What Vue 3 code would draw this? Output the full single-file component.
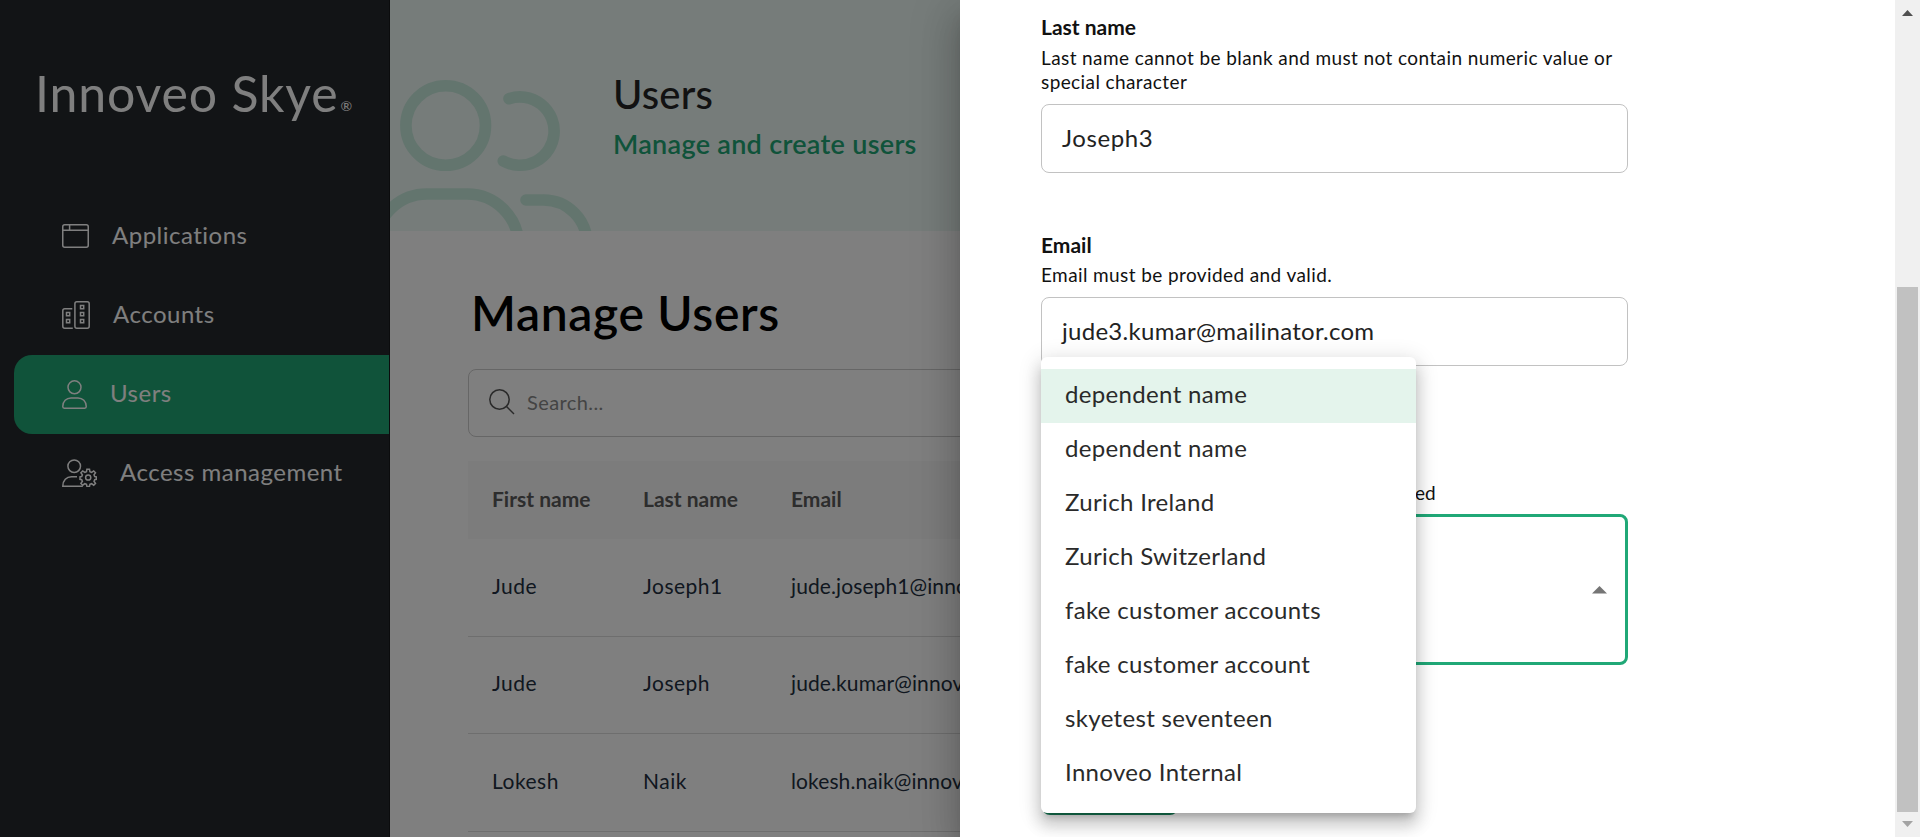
<script setup>
const menu = [
  { id: 'apps', label: 'Applications' },
  { id: 'accounts', label: 'Accounts' },
  { id: 'users', label: 'Users', active: true },
  { id: 'access', label: 'Access management' },
]
const rows = [
  ['Jude', 'Joseph1', 'jude.joseph1@innoveo.com'],
  ['Jude', 'Joseph', 'jude.kumar@innoveo.com'],
  ['Lokesh', 'Naik', 'lokesh.naik@innoveo.com'],
]
const options = [
  'dependent name',
  'dependent name',
  'Zurich Ireland',
  'Zurich Switzerland',
  'fake customer accounts',
  'fake customer account',
  'skyetest seventeen',
  'Innoveo Internal',
]
</script>

<template>
  <div class="page">
    <aside class="sidebar">
      <div class="logo"><span class="brand">Innoveo Skye</span><span class="reg">®</span></div>
      <nav class="menu">
        <a v-for="m in menu" :key="m.id" class="item" :class="[m.id, { active: m.active }]">
          <svg v-if="m.id === 'apps'" width="27" height="24" viewBox="0 0 27 24">
            <rect x=".75" y=".75" width="25.5" height="22.5" rx="2" />
            <path d="M.75 6.2h25.5M7.6.75v5.4" />
          </svg>
          <svg v-else-if="m.id === 'accounts'" width="28" height="28" viewBox="0 0 28 28">
            <rect x="12.9" y=".75" width="14.3" height="26.5" rx="2" />
            <path d="M10.3 7.7H2.8a2 2 0 0 0-2 2v15.500a2 2 0 0 0 2 2h8" />
            <path d="M4.500 11.500h3.200v3.200h-3.200zM4.500 18.500h3.200v3.200h-3.200zM18.500 4.500h3.200v3.200h-3.200zM18.500 11.500h3.200v3.200h-3.200zM18.500 18.500h3.200v3.200h-3.200z" />
          </svg>
          <svg v-else-if="m.id === 'users'" width="25" height="29" viewBox="0 0 25 29">
            <circle cx="12.500" cy="7.300" r="6.500" />
            <path d="M.75 26.500c0-5 3.600-8.600 8.300-8.600h6.900c4.700 0 8.300 3.600 8.300 8.600 0 1.100-.5 1.700-1.500 1.700H2.300c-1 0-1.550-.6-1.550-1.700z" />
          </svg>
          <svg v-else width="35" height="28" viewBox="0 0 35 28">
            <circle cx="12.200" cy="7.200" r="6.300" />
            <path d="M15 17.700H9.500C4.500 17.700.8 21.500.8 27.200h20" />
            <circle cx="26.200" cy="18.500" r="2.600" />
            <path d="M24.500 12.700l.4-2.500h2.600l.4 2.500 1.700.7 2.100-1.500 1.800 1.900-1.500 2 .7 1.700 1.600.3v2.500l-1.600.4-.7 1.600 1.500 2.100-1.800 1.800-2.100-1.500-1.700.7-.4 2h-2.600l-.4-2-1.700-.7-2.100 1.500-1.800-1.800 1.500-2.100-.7-1.600-1.700-.4v-2.500l1.700-.3.7-1.700-1.500-2 1.800-1.900 2.100 1.500z" />
          </svg>
          <span>{{ m.label }}</span>
        </a>
      </nav>
    </aside>

    <main class="main">
      <header class="banner">
        <svg class="people" width="220" height="160" viewBox="390 71 220 160">
          <circle cx="445.700" cy="125.500" r="39.800" />
          <path d="M509 98.700A34.200 34.200 0 1 1 503.300 161" />
          <path d="M375.400 245.600A51.600 51.600 0 0 1 427 194H467A51.600 51.600 0 0 1 518.600 245.600" />
          <path d="M526 200H543.500A43.500 43.500 0 0 1 587 243.500" />
        </svg>
        <div class="heading">
          <h2>Users</h2>
          <p>Manage and create users</p>
        </div>
      </header>
      <section class="content">
        <h1>Manage Users</h1>
        <div class="search">
          <svg width="26" height="26" viewBox="0 0 26 26">
            <circle cx="10.500" cy="10.500" r="9.700" />
            <path d="M17.300 17.300L25 25" />
          </svg>
          <span>Search...</span>
        </div>
        <div class="table">
          <div class="tr th"><span>First name</span><span>Last name</span><span>Email</span></div>
          <div v-for="(r, i) in rows" :key="i" class="tr td">
            <span v-for="c in r" :key="c">{{ c }}</span>
          </div>
        </div>
      </section>
    </main>

    <div class="backdrop"></div>

    <div class="drawer">
      <form class="form">
        <div class="field">
          <label>Last name</label>
          <p>Last name cannot be blank and must not contain numeric value or special character</p>
          <div class="input short">Joseph3</div>
        </div>
        <div class="field second">
          <label>Email</label>
          <p>Email must be provided and valid.</p>
          <div class="input">jude3.kumar@mailinator.com</div>
        </div>
        <div class="field third">
          <p class="tail">ed</p>
          <div class="select">
            <svg width="15" height="8" viewBox="0 0 15 8"><path d="M0 7.500L7.500 0L15 7.500z" /></svg>
          </div>
        </div>
        <div class="submit"></div>
      </form>
      <div class="scrollbar">
        <svg width="11" height="6" viewBox="0 0 11 6"><path d="M0 6L5.500 0L11 6z" fill="#505050" /></svg>
        <div class="thumb"></div>
        <svg width="11" height="6" viewBox="0 0 11 6"><path d="M0 0L5.500 6L11 0z" fill="#a3a3a3" /></svg>
      </div>
      <ul class="dropdown">
        <li v-for="(o, i) in options" :key="i" :class="{ selected: i === 0 }">{{ o }}</li>
      </ul>
    </div>
  </div>
</template>

<style>
body {
  overflow: hidden;
}
</style>

<style scoped>
* {
  box-sizing: border-box;
  margin: 0;
  padding: 0;
}
.page {
  position: relative;
  display: flex;
  width: 1920px;
  height: 837px;
  overflow: hidden;
  background: #fff;
  font-family: Lato, "Open Sans", sans-serif;
  font-size: 20px;
  white-space: nowrap;
}
.sidebar {
  width: 390px;
  flex: none;
  background: #24282c;
  color: #fff;
  border-right: 1px solid #17191b;
}
.logo {
  height: 197px;
  padding: 63px 0 0 35px;
  display: flex;
  line-height: 60px;
}
.brand {
  font-size: 50px;
  letter-spacing: 0.850px;
}
.reg {
  font-size: 14px;
  line-height: 14px;
  margin-top: 36px;
  margin-left: 2px;
}
.item {
  display: flex;
  align-items: center;
  height: 79px;
  margin-left: 14px;
  padding-left: 48px;
  border-radius: 18px 0 0 18px;
  font-size: 24px;
  line-height: 30px;
  letter-spacing: 0.500px;
}
.item span {
  margin-bottom: 3px;
}
.item svg {
  flex: none;
  margin-right: 23px;
  margin-bottom: 1px;
  fill: none;
  stroke: #fff;
  stroke-width: 1.5;
}
.item.users svg {
  margin-bottom: 0;
}
.active {
  background: #20a674;
}
.main {
  flex: 1;
  min-width: 0;
}
.banner {
  height: 231px;
  background: #ecf8f4;
  display: flex;
  align-items: flex-end;
}
.people {
  fill: none;
  stroke: #c6eadc;
  stroke-width: 11.600;
  stroke-linecap: round;
}
.heading {
  align-self: flex-start;
  padding: 70px 0 0 3px;
}
h2 {
  font-size: 40px;
  line-height: 48px;
  font-weight: 500;
  letter-spacing: 0.200px;
  color: #242424;
}
.heading p {
  margin-top: 10px;
  font-size: 27px;
  line-height: 32px;
  font-weight: 600;
  letter-spacing: 0.300px;
  color: #20a674;
}
.content {
  padding: 54px 0 0 78px;
}
h1 {
  padding-left: 3px;
  font-size: 48px;
  line-height: 56px;
  font-weight: 600;
  letter-spacing: 0.650px;
  color: #000;
}
.search {
  margin-top: 28px;
  height: 68px;
  border: 1px solid #ccc;
  border-radius: 8px;
  display: flex;
  align-items: center;
  gap: 12px;
  padding: 0 0 2px 20px;
  color: #888;
  letter-spacing: 0.400px;
}
.search span {
  margin-bottom: 1px;
}
.search svg {
  fill: none;
  stroke: #555;
  stroke-width: 1.5;
}
.table {
  margin-top: 24px;
}
.tr {
  display: grid;
  grid-template-columns: 151px 148px 1fr;
  align-items: center;
  padding: 0 0 4px 24px;
}
.th {
  height: 78px;
  background: #f8f8f8;
  font-weight: 700;
  font-size: 21px;
  color: #5a5a5a;
}
.td {
  height: 97.600px;
  border-bottom: 1.500px solid #dcdcdc;
  font-size: 21px;
  letter-spacing: 0.500px;
  color: #222f40;
}
.td span:last-child {
  letter-spacing: 0.100px;
}
.backdrop {
  position: absolute;
  inset: 0;
  background: rgba(0, 0, 0, 0.5);
}
.drawer {
  position: absolute;
  top: 0;
  right: 0;
  width: 960px;
  height: 837px;
  display: flex;
  justify-content: space-between;
  background: #fff;
  box-shadow: 0 12px 15px -7px rgba(0, 0, 0, 0.2), 0 24px 36px 3px rgba(0, 0, 0, 0.14), 0 9px 45px 8px rgba(0, 0, 0, 0.12);
}
.form {
  width: 668px;
  padding: 15px 0 0 81px;
}
.field label {
  display: block;
  font-size: 21px;
  line-height: 24px;
  font-weight: 700;
  color: #111;
}
.field p {
  margin-top: 7px;
  font-size: 19px;
  line-height: 24px;
  letter-spacing: 0.400px;
  color: #111;
  white-space: normal;
}
.input {
  margin-top: 10px;
  height: 69px;
  border: 1px solid #c2c2c2;
  border-radius: 8px;
  padding-left: 20px;
  font-size: 24px;
  line-height: 65px;
  letter-spacing: 0.280px;
  color: #222;
}
.input.short {
  letter-spacing: 0.600px;
}
.field.second {
  margin-top: 60px;
}
.second p {
  margin-top: 6px;
}
.field.third {
  margin-top: 115px;
}
.field .tail {
  margin-left: 374px;
  letter-spacing: 0;
}
.select {
  margin-top: 9px;
  height: 151px;
  border: 3px solid #20a877;
  border-radius: 8px;
  display: flex;
  justify-content: flex-end;
  align-items: center;
  padding-right: 18px;
}
.select svg {
  fill: #757575;
}
.submit {
  margin: 90px 0 0 1px;
  width: 136px;
  height: 60px;
  border-radius: 8px;
  background: #178059;
}
.scrollbar {
  width: 25px;
  padding: 10px 2px 10px;
  background: #f0f0f0;
  display: flex;
  flex-direction: column;
  align-items: center;
}
.thumb {
  margin: 271px 0 9px;
  width: 21px;
  height: 525px;
  background: #c1c1c1;
}
.dropdown {
  position: absolute;
  left: 81px;
  top: 357px;
  width: 375px;
  height: 456px;
  padding: 12px 0;
  list-style: none;
  background: #fff;
  border-radius: 6px;
  box-shadow: 0 7.500px 7.500px -4.500px rgba(0, 0, 0, 0.2), 0 12px 15px 1.500px rgba(0, 0, 0, 0.14), 0 4.500px 21px 3px rgba(0, 0, 0, 0.12);
}
.dropdown li {
  height: 54px;
  padding-left: 24px;
  font-size: 24px;
  line-height: 50px;
  letter-spacing: 0.340px;
  color: #2a2a2a;
}
.dropdown .selected {
  background: #e4f4ec;
}
</style>
